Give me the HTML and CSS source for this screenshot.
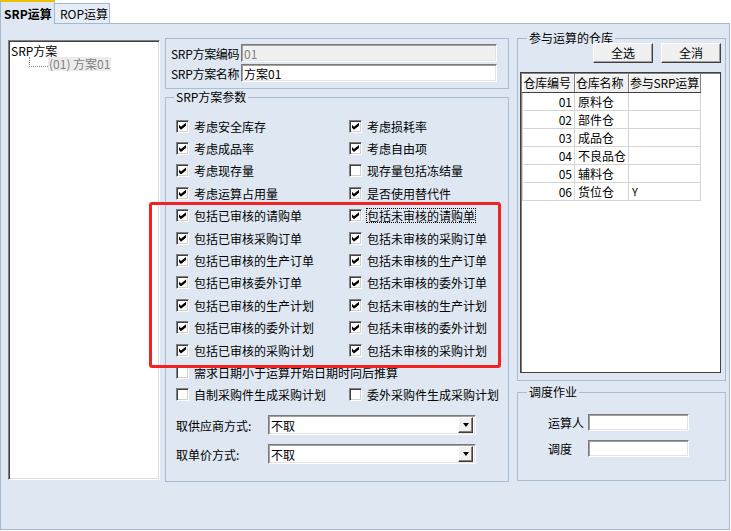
FILE: index.html
```html
<!DOCTYPE html>
<html lang="zh">
<head>
<meta charset="utf-8">
<title>SRP运算</title>
<link rel="stylesheet" href="styles.css">
</head>
<body>
<div class="window">
  <div class="tabs">
    <div class="tab active">SRP运算</div>
    <div class="tab">ROP运算</div>
  </div>
  <div class="panel">
    <div class="tree">
      <div class="tree-root">SRP方案</div>
      <div class="tree-child"><span class="branch"></span><span class="node">(01) 方案01</span></div>
    </div>

    <div class="middle">
      <div class="head-box">
        <div class="field-row"><span class="flabel">SRP方案编码</span><div class="input disabled">01</div></div>
        <div class="field-row"><span class="flabel">SRP方案名称</span><div class="input">方案01</div></div>
      </div>

      <fieldset class="group params">
        <legend>SRP方案参数</legend>
        <div class="checks">
          <div class="check"><span class="cb on"></span>考虑安全库存</div>
          <div class="check"><span class="cb on"></span>考虑损耗率</div>
          <div class="check"><span class="cb on"></span>考虑成品率</div>
          <div class="check"><span class="cb on"></span>考虑自由项</div>
          <div class="check"><span class="cb on"></span>考虑现存量</div>
          <div class="check"><span class="cb"></span>现存量包括冻结量</div>
          <div class="check"><span class="cb on"></span>考虑运算占用量</div>
          <div class="check"><span class="cb on"></span>是否使用替代件</div>
          <div class="check"><span class="cb on"></span>包括已审核的请购单</div>
          <div class="check"><span class="cb on"></span><span class="focus">包括未审核的请购单</span></div>
          <div class="check"><span class="cb on"></span>包括已审核采购订单</div>
          <div class="check"><span class="cb on"></span>包括未审核的采购订单</div>
          <div class="check"><span class="cb on"></span>包括已审核的生产订单</div>
          <div class="check"><span class="cb on"></span>包括未审核的生产订单</div>
          <div class="check"><span class="cb on"></span>包括已审核委外订单</div>
          <div class="check"><span class="cb on"></span>包括未审核的委外订单</div>
          <div class="check"><span class="cb on"></span>包括已审核的生产计划</div>
          <div class="check"><span class="cb on"></span>包括未审核的生产计划</div>
          <div class="check"><span class="cb on"></span>包括已审核的委外计划</div>
          <div class="check"><span class="cb on"></span>包括未审核的委外计划</div>
          <div class="check"><span class="cb on"></span>包括已审核的采购计划</div>
          <div class="check"><span class="cb on"></span>包括未审核的采购计划</div>
          <div class="check wide"><span class="cb"></span>需求日期小于运算开始日期时向后推算</div>
          <div class="check"><span class="cb"></span>自制采购件生成采购计划</div>
          <div class="check"><span class="cb"></span>委外采购件生成采购计划</div>
        </div>
        <div class="combo-row"><span class="clabel">取供应商方式:</span><div class="combo"><span class="ctext">不取</span><span class="dd"></span></div></div>
        <div class="combo-row"><span class="clabel">取单价方式:</span><div class="combo"><span class="ctext">不取</span><span class="dd"></span></div></div>
      </fieldset>
    </div>

    <div class="right">
      <fieldset class="group warehouses">
        <legend>参与运算的仓库</legend>
        <div class="buttons">
          <div class="btn">全选</div>
          <div class="btn">全消</div>
        </div>
        <div class="grid">
          <table>
            <colgroup><col class="c1"><col class="c2"><col class="c3"></colgroup>
            <thead><tr><th>仓库编号</th><th>仓库名称</th><th>参与SRP运算</th></tr></thead>
            <tbody>
              <tr><td class="num">01</td><td>原料仓</td><td></td></tr>
              <tr><td class="num">02</td><td>部件仓</td><td></td></tr>
              <tr><td class="num">03</td><td>成品仓</td><td></td></tr>
              <tr><td class="num">04</td><td>不良品仓</td><td></td></tr>
              <tr><td class="num">05</td><td>辅料仓</td><td></td></tr>
              <tr><td class="num">06</td><td>货位仓</td><td class="flag">Y</td></tr>
            </tbody>
          </table>
        </div>
      </fieldset>

      <fieldset class="group dispatch">
        <legend>调度作业</legend>
        <div class="dgrid">
          <span>运算人</span><div class="input small"></div>
          <span>调度</span><div class="input small"></div>
        </div>
      </fieldset>
    </div>

    <div class="annot"></div>
  </div>
</div>
</body>
</html>
```

FILE: styles.css
```css
* { box-sizing: border-box; }
html, body { margin: 0; padding: 0; background: #ffffff; }
body {
  font-family: "Noto Sans CJK SC", "Liberation Sans", sans-serif;
  font-size: 12px;
  line-height: 13px;
  color: #000;
}
.window { width: 730px; height: 531px; }

/* tabs */
.tabs {
  display: flex;
  align-items: flex-end;
  height: 23px;
  position: relative;
  z-index: 1;
}
.tab {
  width: 55px;
  height: 20px;
  padding: 3px 0 0 5px;
  white-space: nowrap;
  background: #e4ecf5;
  border: 1px solid #a3b7cf;
  border-bottom: none;
  border-left: none;
}
.tab.active {
  height: 24px;
  margin-bottom: -1px;
  background: #dfe8f2;
  border-left: 1px solid #a3b7cf;
  border-top: 2px solid #f0c000;
  font-weight: bold;
  padding: 5px 0 0 3px;
}

/* main panel */
.panel {
  position: relative;
  display: flex;
  align-items: flex-start;
  height: 507px;
  background: #dfe8f2;
  border: 1px solid #a3b7cf;
  padding: 8px 0 0 7px;
}

/* tree */
.tree {
  margin-top: 8px;
  width: 152px;
  height: 440px;
  background: #fff;
  border: 1px solid;
  border-color: #808080 #ffffff #ffffff #808080;
  box-shadow: inset 1px 1px 0 #404040, inset -1px -1px 0 #dcdcdc;
  padding: 3px 0 0 2px;
}
.tree-root { line-height: 13px; }
.tree-child { display: flex; align-items: flex-end; height: 14px; }
.branch {
  width: 19px;
  height: 10px;
  margin-left: 18px;
  margin-bottom: 4px;
  border-left: 1px dotted #808080;
  border-bottom: 1px dotted #808080;
}
.node {
  background: #ececec;
  color: #808080;
  padding: 0 1px;
  line-height: 14px;
}

/* middle column */
.middle {
  margin-left: 5px;
  margin-top: 6px;
  width: 344px;
}
.head-box {
  height: 51px;
  border: 1px solid #a7bdd6;
  padding: 5px 0 0 5px;
  display: flex;
  flex-direction: column;
  gap: 2px;
}
.field-row { display: flex; align-items: center; }
.flabel {
  flex: none;
  width: 70px;
  white-space: nowrap;
  letter-spacing: -0.3px;
}
.input {
  flex: none;
  width: 256px;
  height: 18px;
  background: #fff;
  border: 1px solid;
  border-color: #7a7a7a #ffffff #ffffff #7a7a7a;
  box-shadow: inset 1px 1px 0 #a0a0a0, inset -1px -1px 0 #e3e3e3;
  padding: 2px 0 0 2px;
  line-height: 14px;
}
.input.disabled { background: #f0f0f0; color: #808080; }

/* group boxes */
.group {
  margin: 0;
  padding: 0;
  min-width: 0;
  border: 1px solid #a7bdd6;
}
.group legend {
  padding: 0 2px;
  line-height: 12px;
}
.params {
  margin-top: 2px;
  height: 391px;
  padding: 12px 0 0 10px;
}
.params legend { margin-left: -2px; }

.checks {
  display: grid;
  grid-template-columns: 173px 1fr;
}
.check {
  display: flex;
  align-items: center;
  height: 22.4px;
  white-space: nowrap;
}
.check.wide { grid-column: 1 / span 2; }
.cb {
  position: relative;
  flex: none;
  width: 13px;
  height: 13px;
  margin-right: 5px;
  background: #fff;
  border: 1px solid;
  border-color: #808080 #ffffff #ffffff #808080;
  box-shadow: inset 1px 1px 0 #404040, inset -1px -1px 0 #d4d0c8;
}
.cb.on::after {
  content: "";
  position: absolute;
  left: 2px;
  top: 2px;
  width: 7px;
  height: 7px;
  background: #000;
  clip-path: polygon(0 28%, 28% 57%, 100% 0, 100% 43%, 28% 100%, 0 71%);
}
.focus {
  outline: 1px dotted #000;
  outline-offset: 0;
}

.combo-row {
  display: flex;
  align-items: center;
  height: 20px;
  margin-top: 9px;
}
.clabel { width: 92px; }
.combo {
  width: 208px;
  height: 20px;
  display: flex;
  align-items: center;
  background: #fff;
  border: 1px solid;
  border-color: #7a7a7a #ffffff #ffffff #7a7a7a;
  box-shadow: inset 1px 1px 0 #a0a0a0, inset -1px -1px 0 #e3e3e3;
  padding: 0 2px 0 2px;
}
.ctext { flex: 1; }
.dd {
  width: 15px;
  height: 16px;
  display: flex;
  align-items: center;
  justify-content: center;
  background: #f0f0f0;
  border: 1px solid;
  border-color: #ffffff #404040 #404040 #ffffff;
  box-shadow: inset -1px -1px 0 #808080;
}
.dd::before {
  content: "";
  width: 0;
  height: 0;
  border-left: 3.5px solid transparent;
  border-right: 3.5px solid transparent;
  border-top: 4px solid #000;
}

/* right column */
.right {
  margin-left: 8px;
  width: 209px;
  display: flex;
  flex-direction: column;
}
.warehouses {
  height: 349px;
  padding: 0 3px 6px 2px;
}
.warehouses legend { margin-left: 7px; }
.buttons {
  display: flex;
  justify-content: flex-end;
  gap: 8px;
  padding-right: 1px;
  margin-top: -1px;
}
.btn {
  width: 60px;
  height: 20px;
  text-align: center;
  line-height: 17px;
  background: #f0f0f0;
  border: 1px solid;
  border-color: #ffffff #404040 #404040 #ffffff;
  box-shadow: inset -1px -1px 0 #a0a0a0;
}
.grid {
  margin-top: 9px;
  width: 201px;
  height: 301px;
  background: #fff;
  border: 1px solid #404040;
  box-shadow: inset 1px 1px 0 #808080;
  padding: 1px 0 0 1px;
}
.grid table {
  border-collapse: collapse;
  table-layout: fixed;
  width: 178px;
}
.c1 { width: 52px; }
.c2 { width: 54px; }
.c3 { width: 72px; }
.grid th {
  height: 18px;
  padding: 0 0 0 1px;
  background: #f0f0f0;
  font-weight: normal;
  text-align: left;
  white-space: nowrap;
  overflow: hidden;
  letter-spacing: -0.2px;
  border-right: 1px solid #808080;
  border-bottom: 1px solid #404040;
  box-shadow: inset 1px 1px 0 #ffffff;
}
.grid td {
  height: 18px;
  padding: 0 3px;
  border: 1px solid #d4d4d4;
  white-space: nowrap;
}
.grid td.num { text-align: right; padding-right: 2px; }
.grid td.flag { font-size: 11px; }

.dispatch {
  margin-top: 5px;
  height: 95px;
  padding: 16px 0 0 30px;
}
.dispatch legend { margin-left: -21px; }
.dgrid {
  display: grid;
  grid-template-columns: 40px 101px;
  row-gap: 9px;
  align-items: center;
}
.input.small { width: 101px; height: 17px; }

/* red annotation */
.annot {
  position: absolute;
  left: 148px;
  top: 178px;
  width: 352px;
  height: 166px;
  border: 3px solid #f22222;
  border-radius: 3px;
  pointer-events: none;
}
```
